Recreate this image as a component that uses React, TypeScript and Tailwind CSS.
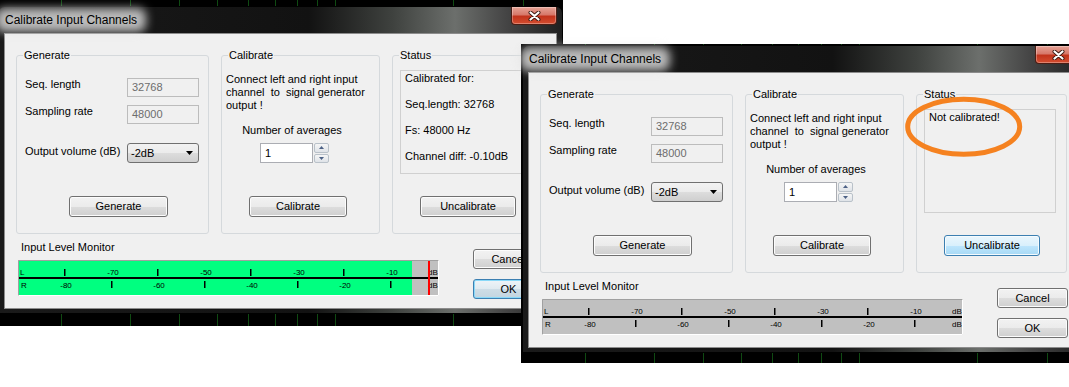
'use client';

/**
 * DIÁLOGOS DE CALIBRAÇÃO DOS CANAIS DE ENTRADA
 *
 * Duas capturas da mesma janela (Windows 7) lado a lado:
 * à esquerda já calibrada, à direita ainda sem calibração.
 */

import React from 'react';

type ButtonLook = 'normal' | 'focus' | 'hover';

interface CalibrateDialogProps {
  /** Mostra os dados da calibração e o medidor ativo */
  calibrated: boolean;
}

const BUTTON_LOOKS: Record<ButtonLook, string> = {
  normal:
    'border-[#707070] bg-[linear-gradient(180deg,#f2f2f2_0%,#ebebeb_50%,#dddddd_50%,#cfcfcf_100%)] shadow-[inset_0_0_0_1px_#fcfcfc]',
  focus:
    'border-[#3c7fb1] bg-[linear-gradient(180deg,#eef4f8_0%,#e0eaf0_50%,#cedde6_50%,#c3d5e0_100%)] shadow-[inset_0_0_0_1px_#8ad9f8]',
  hover:
    'border-[#3c7fb1] bg-[linear-gradient(180deg,#eaf6fd_0%,#d9f0fc_50%,#bee6fd_50%,#a7d9f5_100%)] shadow-[inset_0_0_0_1px_#f4fbfe]',
};

// Linhas verdes do gráfico que fica atrás das janelas
const GRID_X = [61, 130, 179, 217, 248, 274.5, 297, 317, 335, 453, 523];

const L_TICKS = [46, 139, 232, 325];
const R_TICKS = [93, 186, 279, 372];
const L_LABELS: [string, number][] = [
  ['-70', 95],
  ['-50', 188],
  ['-30', 281],
  ['-10', 374],
];
const R_LABELS: [string, number][] = [
  ['-80', 48],
  ['-60', 141],
  ['-40', 234],
  ['-20', 327],
];

function ScreenGrid({ width, height, shift }: { width: number; height: number; shift: number }) {
  return (
    <svg className="absolute left-0 top-0" width={width} height={height}>
      {GRID_X.map((x) => (
        <rect key={x} x={Math.round(x + shift)} y={0} width={1} height={height} fill="#0f4a12" />
      ))}
    </svg>
  );
}

function WinButton({
  label,
  look = 'normal',
  className = '',
}: {
  label: string;
  look?: ButtonLook;
  className?: string;
}) {
  return (
    <button
      type="button"
      className={`flex items-center justify-center rounded-[3px] border text-[11px] leading-[13px] text-black ${BUTTON_LOOKS[look]} ${className}`}
    >
      {label}
    </button>
  );
}

function CloseButton() {
  return (
    <div className="mr-[5px] flex h-[18px] w-[46px] items-center justify-center rounded-b-[4px] border border-t-0 border-[#4b1d14] bg-[linear-gradient(180deg,#e6a497_0%,#d7786a_45%,#c2331c_55%,#d44e30_100%)] shadow-[inset_0_0_0_1px_rgba(255,255,255,0.3)]">
      <svg width="13" height="10" viewBox="0 0 13 10">
        <path d="M2.5 1.5 L10.5 8.5 M10.5 1.5 L2.5 8.5" stroke="#3a1711" strokeWidth="4" strokeLinecap="round" />
        <path d="M2.5 1.5 L10.5 8.5 M10.5 1.5 L2.5 8.5" stroke="#ffffff" strokeWidth="2.2" strokeLinecap="round" />
      </svg>
    </div>
  );
}

function GroupBox({
  title,
  className = '',
  children,
}: {
  title: string;
  className?: string;
  children: React.ReactNode;
}) {
  return (
    <fieldset className={`h-[185px] rounded-[3px] border border-[#d5d9dc] ${className}`}>
      <legend className="ml-[6px] px-[1px] leading-[13px]">{title}</legend>
      {children}
    </fieldset>
  );
}

function DisabledField({ value }: { value: string }) {
  return (
    <div className="flex h-[19px] w-[72px] items-center border border-[#bcbcbc] bg-[#f0f0f0] pl-[4px] text-[#6d6d6d]">
      {value}
    </div>
  );
}

function LevelMeter({ active }: { active: boolean }) {
  return (
    <svg
      width={421}
      height={36}
      className="block"
      fontFamily="'Liberation Sans', Arial, sans-serif"
      fontSize={8}
      fill="#000"
    >
      <rect width={421} height={36} fill="#c0c0c0" />
      {active && <rect x={1} y={1} width={393} height={34} fill="#00ff80" />}
      <rect x={0} y={17} width={421} height={2} fill="#000" />
      {L_TICKS.map((x) => (
        <rect key={x} x={x} y={9} width={1.5} height={7} />
      ))}
      {R_TICKS.map((x) => (
        <rect key={x} x={x} y={21} width={1.5} height={7} />
      ))}
      <text x={2} y={15}>
        L
      </text>
      <text x={3} y={28}>
        R
      </text>
      {L_LABELS.map(([t, x]) => (
        <text key={t} x={x} y={15} textAnchor="middle">
          {t}
        </text>
      ))}
      {R_LABELS.map(([t, x]) => (
        <text key={t} x={x} y={28} textAnchor="middle">
          {t}
        </text>
      ))}
      <text x={415} y={15} textAnchor="middle">
        dB
      </text>
      <text x={415} y={28} textAnchor="middle">
        dB
      </text>
      {active && <rect x={410} y={1} width={2} height={34} fill="#ff0000" />}
      <path d="M0.5 35.5 V0.5 H420.5" stroke="#a0a0a0" fill="none" />
      <path d="M0.5 35.5 H420.5 V0.5" stroke="#ffffff" fill="none" />
    </svg>
  );
}

function CalibrateDialog({ calibrated }: CalibrateDialogProps) {
  const statusLines = calibrated
    ? ['Calibrated for:', 'Seq.length: 32768', 'Fs: 48000 Hz', 'Channel diff: -0.10dB']
    : ['Not calibrated!'];

  return (
    <div className="flex h-[308px] w-[565px] flex-col rounded-t-[7px] border border-black bg-[linear-gradient(90deg,#1a1a1a_0%,#121212_55%,#3f423f_70%,#6c6f6c_81%,#454545_90%,#202020_100%)]">
      {/* Barra de título, com o brilho do Aero atrás do texto */}
      <div className="flex h-[26px] shrink-0 items-start justify-between">
        <span className="relative ml-[6px] mt-[6px] text-[12px] leading-[14px] text-black">
          <span className="absolute -bottom-[5px] -left-[9px] -right-[9px] -top-[5px] rounded-[8px] bg-[#e4e4e4]/80 blur-[5px]" />
          <span className="relative">Calibrate Input Channels</span>
        </span>
        <CloseButton />
      </div>

      {/* Área cliente */}
      <div className="px-[5px]">
        <div className="flex h-[276px] w-[553px] flex-col border border-[#8c8c8c] bg-[#f0f0f0] text-[11px] leading-[13px] text-black">
          <div className="ml-[11px] mt-[15px] flex gap-[12px]">
            {/* Gerar sinal */}
            <GroupBox title="Generate" className="w-[193px]">
              <div className="pl-[8px]">
                <div className="mt-[16px] flex h-[19px] items-start">
                  <span className="w-[102px]">Seq. length</span>
                  <DisabledField value="32768" />
                </div>
                <div className="mt-[8px] flex h-[19px] items-start">
                  <span className="w-[102px]">Sampling rate</span>
                  <DisabledField value="48000" />
                </div>
                <div className="mt-[19px] flex h-[20px] items-start">
                  <span className="mt-[2px] w-[102px]">Output volume (dB)</span>
                  <div className="flex h-[20px] w-[72px] items-center justify-between rounded-[3px] border border-[#707070] bg-[linear-gradient(180deg,#f2f2f2_0%,#ebebeb_50%,#dddddd_50%,#cfcfcf_100%)] pl-[3px] pr-[5px]">
                    <span>-2dB</span>
                    <svg width="7" height="4" viewBox="0 0 7 4">
                      <path d="M0 0 H7 L3.5 4 Z" fill="#000" />
                    </svg>
                  </div>
                </div>
                <WinButton label="Generate" className="ml-[44px] mt-[33px] h-[21px] w-[99px]" />
              </div>
            </GroupBox>

            {/* Calibrar */}
            <GroupBox title="Calibrate" className="w-[159px]">
              <div className="mt-[11px] whitespace-pre pl-[4px]">
                <div>Connect left and right input</div>
                <div>channel  to  signal generator</div>
                <div>output !</div>
              </div>
              <div className="mt-[12px] w-[140px] text-center">Number of averages</div>
              <div className="ml-[38px] mt-[6px] flex h-[20px]">
                <div className="flex h-[20px] w-[53px] items-center border border-[#abadb3] bg-white pl-[4px]">1</div>
                <div className="ml-[1px] flex w-[15px] flex-col gap-[1px]">
                  {['M0 3 L2.5 0 L5 3 Z', 'M0 0 H5 L2.5 3 Z'].map((d) => (
                    <div
                      key={d}
                      className="flex h-[9.5px] items-center justify-center rounded-[2px] border border-[#b9c1c9] bg-[linear-gradient(180deg,#f6f6f6,#dfe3e8)]"
                    >
                      <svg width="5" height="3" viewBox="0 0 5 3">
                        <path d={d} fill="#4d6185" />
                      </svg>
                    </div>
                  ))}
                </div>
              </div>
              <WinButton label="Calibrate" className="ml-[27px] mt-[33px] h-[21px] w-[98px]" />
            </GroupBox>

            {/* Estado */}
            <GroupBox title="Status" className="w-[151px]">
              <div className="ml-[7px] mt-[8px] flex h-[104px] w-[132px] flex-col gap-[13px] border border-[#d0d0d0] pl-[4px] pt-[1px]">
                {statusLines.map((line) => (
                  <span key={line}>{line}</span>
                ))}
              </div>
              <WinButton
                label="Uncalibrate"
                look={calibrated ? 'normal' : 'hover'}
                className="ml-[27px] mt-[22px] h-[21px] w-[96px]"
              />
            </GroupBox>
          </div>

          {/* Monitor de nível e botões finais */}
          <div className="flex">
            <div className="ml-[13px] flex flex-col">
              <span className="mt-[7px] pl-[3px]">Input Level Monitor</span>
              <div className="mt-[6px]">
                <LevelMeter active={calibrated} />
              </div>
            </div>
            <div className="ml-[34px] flex flex-col">
              <WinButton label="Cancel" className="mt-[15px] h-[20px] w-[71px]" />
              <WinButton
                label="OK"
                look={calibrated ? 'focus' : 'normal'}
                className="mt-[10px] h-[20px] w-[71px]"
              />
            </div>
          </div>
        </div>
      </div>
    </div>
  );
}

export default function App() {
  return (
    <div className="relative h-[387px] w-[1069px] overflow-hidden bg-white font-['Liberation_Sans',Arial,sans-serif]">
      {/* Captura 1: janela calibrada */}
      <div className="absolute left-0 top-0 h-[326px] w-[563px] bg-black">
        <ScreenGrid width={563} height={326} shift={0} />
        <div className="absolute left-[-2px] top-[6px]">
          <CalibrateDialog calibrated />
        </div>
      </div>

      {/* Captura 2: janela sem calibração */}
      <div className="absolute left-[521px] top-[44px] h-[319px] w-[548px] bg-black">
        <ScreenGrid width={548} height={319} shift={2.7} />
        <div className="absolute left-[1px] top-[1px]">
          <CalibrateDialog calibrated={false} />
        </div>
      </div>

      {/* Marcação laranja em volta do estado */}
      <svg className="absolute left-[900px] top-[94px]" width="130" height="66" viewBox="0 0 130 66">
        <ellipse cx="63.7" cy="32.7" rx="56" ry="27.5" fill="none" stroke="#f58220" strokeWidth="5" />
      </svg>
    </div>
  );
}
